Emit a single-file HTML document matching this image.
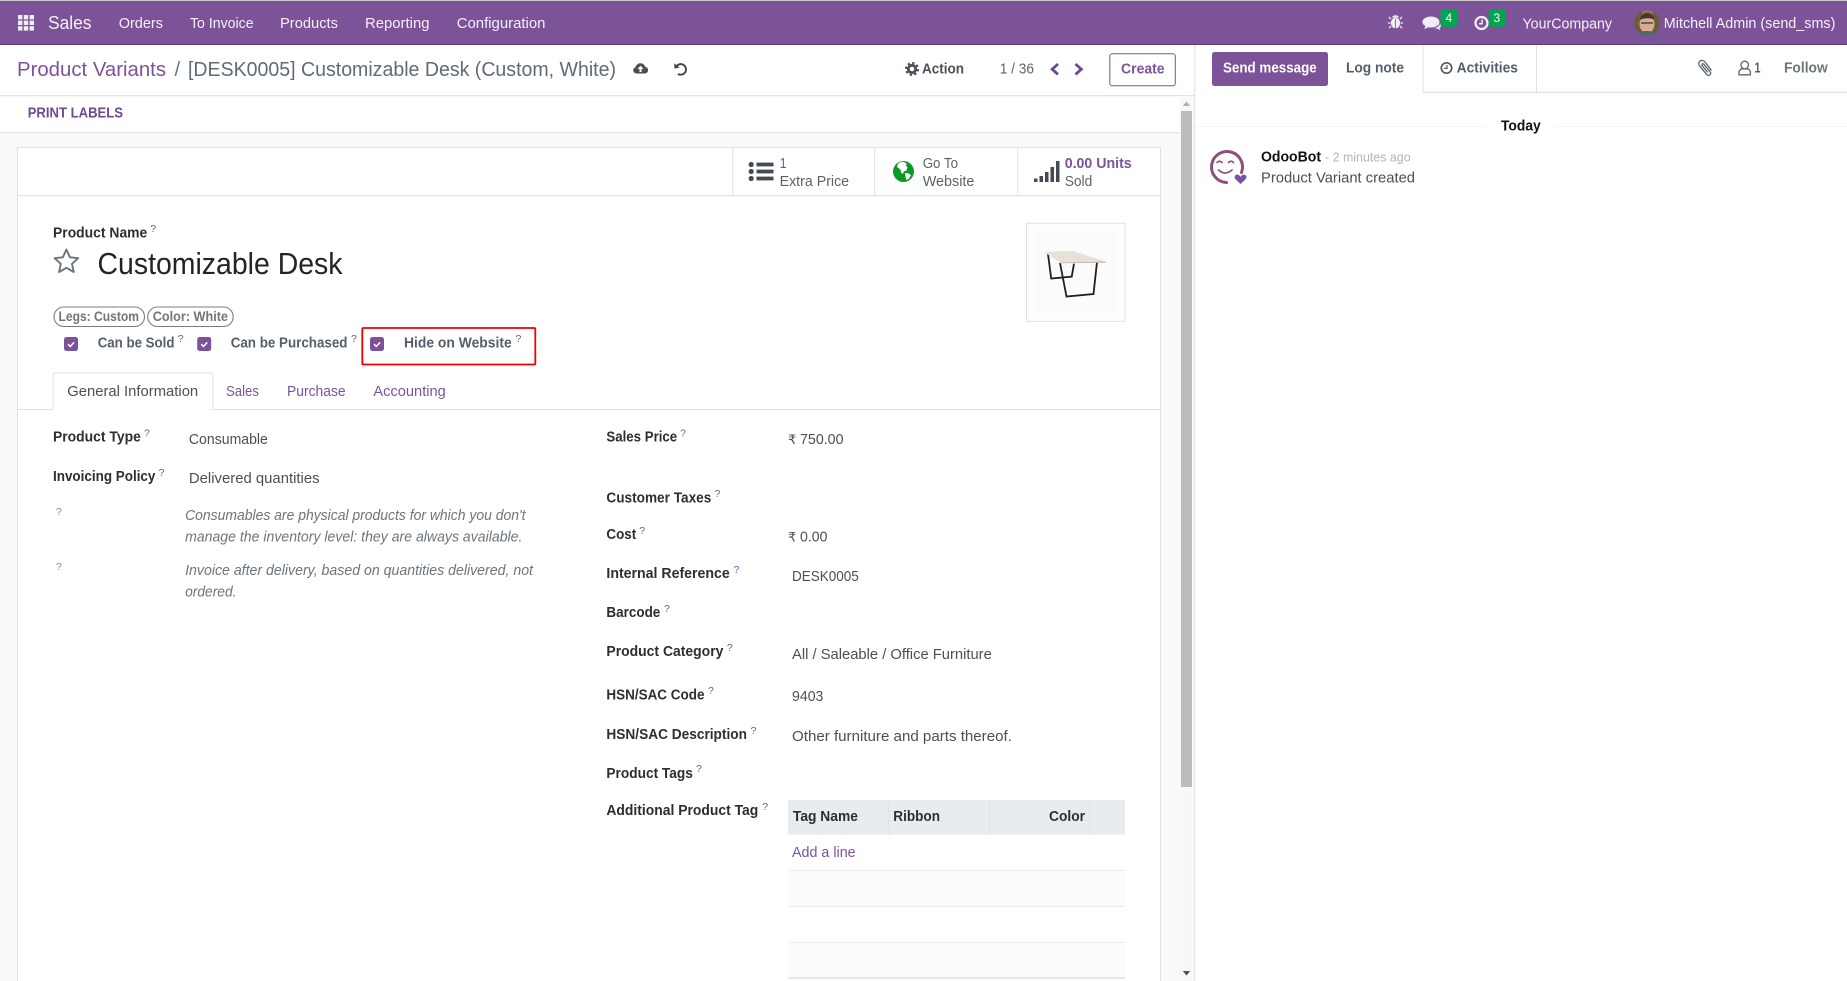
<!DOCTYPE html>
<html lang="en">
<head>
<meta charset="utf-8">
<title>Product Variants</title>
<style>
html,body{margin:0;padding:0;background:#fff;overflow:hidden}
svg{display:block}
text{font-family:"Liberation Sans",sans-serif;font-size:15px;fill:#495057}
.n{fill:rgba(255,255,255,.92);font-size:15px}
.l{font-weight:700;fill:#2a2f34;font-size:14.5px}
.p{fill:#7c5399}
.q{fill:#7c5399;font-size:10.5px}
.v{fill:#495057}
.i{font-style:italic;fill:#6c757d}
.b{font-weight:700;fill:#555f69;font-size:14.5px}
</style>
</head>
<body>
<svg xmlns="http://www.w3.org/2000/svg" width="1847" height="981" viewBox="0 0 1847 981">
<rect width="1847" height="981" fill="#fff"/>

<!-- navbar -->
<rect width="1847" height="1.2" fill="#c9c9c9"/>
<rect y="1" width="1847" height="44" fill="#7c5299"/>
<rect y="44" width="1847" height="1" fill="#5f3f78"/>
<g fill="#f1ecf4">
<rect x="18" y="15" width="4.4" height="4.4"/><rect x="23.8" y="15" width="4.4" height="4.4"/><rect x="29.6" y="15" width="4.4" height="4.4"/>
<rect x="18" y="20.6" width="4.4" height="4.4"/><rect x="23.8" y="20.6" width="4.4" height="4.4"/><rect x="29.6" y="20.6" width="4.4" height="4.4"/>
<rect x="18" y="26.2" width="4.4" height="4.4"/><rect x="23.8" y="26.2" width="4.4" height="4.4"/><rect x="29.6" y="26.2" width="4.4" height="4.4"/>
</g>
<text class="n" x="48" y="29" style="font-size:18.5px" textLength="43.5" lengthAdjust="spacingAndGlyphs">Sales</text>
<text class="n" x="118.7" y="28" textLength="44.3" lengthAdjust="spacingAndGlyphs">Orders</text>
<text class="n" x="190" y="28" textLength="63.6" lengthAdjust="spacingAndGlyphs">To Invoice</text>
<text class="n" x="280" y="28" textLength="58" lengthAdjust="spacingAndGlyphs">Products</text>
<text class="n" x="365" y="28" textLength="64.5" lengthAdjust="spacingAndGlyphs">Reporting</text>
<text class="n" x="456.7" y="28" textLength="88.8" lengthAdjust="spacingAndGlyphs">Configuration</text>

<!-- bug -->
<g fill="#f1ecf4" stroke="#f1ecf4">
<ellipse cx="1395.5" cy="23" rx="4.6" ry="5.4" stroke="none"/>
<path d="M1392 17.5a3.6 3 0 0 1 7 0z" stroke="none"/>
<path d="M1391 19l-2-2M1400 19l2-2M1390.5 23h-2.5M1400.5 23h2.5M1391 26l-2 2.2M1400 26l2 2.2" fill="none" stroke-width="1.3"/>
</g>
<rect x="1395.1" y="19" width=".8" height="9.5" fill="#7c5299"/>
<!-- chat -->
<path d="M1431 16.5c5 0 8.5 2.500 8.5 5.5s-3.500 5.500-8.500 5.500c-1 0-2-.1-3-.3-1 .9-2.300 1.400-4 1.600 .8-.9 1.300-1.800 1.400-2.800-2-1-3-2.500-3-4 0-3 3.500-5.500 8.600-5.500z" fill="#f1ecf4"/>
<path d="M1440 23.500c.9.800 1.200 1.700 1 2.600-.2.800-.8 1.500-1.500 1.900.1.700.5 1.300 1 1.900-1.400-.2-2.500-.7-3.300-1.400-1 .1-2 0-2.900-.2 2.900-.6 5.300-2.300 5.700-4.800z" fill="#f1ecf4"/>
<rect x="1440.6" y="9" width="16.4" height="17.7" rx="2" fill="#00a64f"/>
<text x="1445.5" y="22" style="font-size:12px;fill:#fff">4</text>
<!-- clock -->
<circle cx="1481.5" cy="23" r="6" fill="none" stroke="#f1ecf4" stroke-width="2.300"/>
<path d="M1482 19.500v4.200h-3" fill="none" stroke="#f1ecf4" stroke-width="1.500"/>
<rect x="1488.7" y="9" width="16.4" height="17.7" rx="2" fill="#00a64f"/>
<text x="1493.5" y="22" style="font-size:12px;fill:#fff">3</text>
<text class="n" x="1522.5" y="28.3" textLength="89.5" lengthAdjust="spacingAndGlyphs">YourCompany</text>
<!-- avatar -->
<clipPath id="av"><circle cx="1647" cy="23" r="13"/></clipPath>
<g clip-path="url(#av)">
<rect x="1634" y="10" width="26" height="26" fill="#8a7658"/>
<path d="M1634 10h8v26h-8zM1653 10h7v26h-7z" fill="#6d5a42"/>
<ellipse cx="1647" cy="24" rx="7.5" ry="9" fill="#d9ab90"/>
<path d="M1640 20c.5-4.500 3.500-7 7.500-7s6.500 2.500 7 7c-3-2.200-10-2.600-14.500 0z" fill="#4a372b"/>
<path d="M1641 23h12" stroke="#3a3532" stroke-width="1.200"/>
<path d="M1635 36c2-4 6-5 12-5s10 1 12 5z" fill="#55656c"/>
</g>
<text class="n" x="1663.8" y="28" textLength="171.6" lengthAdjust="spacingAndGlyphs">Mitchell Admin (send_sms)</text>

<!-- control panel -->
<text x="17" y="76" class="p" style="font-size:20.5px" textLength="149" lengthAdjust="spacingAndGlyphs">Product Variants</text>
<text x="174.500" y="76" style="font-size:20.5px;fill:#6c757d">/</text>
<text x="188" y="76" style="font-size:20.5px;fill:#5f6b76" textLength="428" lengthAdjust="spacingAndGlyphs">[DESK0005] Customizable Desk (Custom, White)</text>
<!-- cloud upload -->
<path d="M637 73.500c-2.200 0-3.800-1.500-3.800-3.300 0-1.500 1-2.700 2.400-3.100 .5-2.300 2.400-3.900 4.800-3.900 2.300 0 4.200 1.400 4.700 3.500 1.700.2 3 1.700 3 3.400 0 2-1.700 3.400-3.800 3.400z" fill="#4a4f55"/>
<path d="M640.500 65.800l-3 3.200h2v3h2v-3h2z" fill="#fff"/>
<!-- undo -->
<path d="M676.500 66.200a5.300 5.300 0 1 1 1.400 7.700" fill="none" stroke="#3d4349" stroke-width="1.900"/>
<path d="M674.200 63.200l.3 5.300 5-.8z" fill="#3d4349"/>
<!-- gear -->
<circle cx="912" cy="69" r="3.700" fill="none" stroke="#4b5158" stroke-width="2.800"/>
<circle cx="912" cy="69" r="6" fill="none" stroke="#4b5158" stroke-width="2" stroke-dasharray="2.400 2.300"/>
<text x="922" y="73.3" class="b" style="fill:#4b5158" textLength="42" lengthAdjust="spacingAndGlyphs">Action</text>
<text x="999.7" y="73.5" style="font-size:14.5px;fill:#5b646d" textLength="34.3" lengthAdjust="spacingAndGlyphs">1 / 36</text>
<path d="M1058 64l-5.800 5.200 5.800 5.200" fill="none" stroke="#6a4a8a" stroke-width="2.800"/>
<path d="M1075.500 64l5.800 5.200-5.800 5.200" fill="none" stroke="#6a4a8a" stroke-width="2.800"/>
<rect x="1109.800" y="53.800" width="65.500" height="32" rx="2.500" fill="#fff" stroke="#7c5399"/>
<text x="1121" y="73.300" class="p" style="font-size:14.5px;font-weight:700" textLength="43.600" lengthAdjust="spacingAndGlyphs">Create</text>
<rect y="95" width="1195" height="1.300" fill="#dee2e6"/>

<!-- action row -->
<text x="27.7" y="117.7" style="font-size:14.5px;font-weight:700;fill:#6f4a8e" textLength="95.300" lengthAdjust="spacingAndGlyphs">PRINT LABELS</text>
<rect y="132" width="1180" height="1.300" fill="#dee2e6"/>

<!-- form background -->
<rect y="133.300" width="1180" height="848" fill="#f8f9fa"/>
<rect x="17" y="147" width="1144" height="834" fill="#fff"/>
<path d="M17.500 981V147.500H1160.500V981" fill="none" stroke="#dee2e6"/>
<rect x="17" y="195" width="1144" height="1.200" fill="#dee2e6"/>
<rect x="732.200" y="147" width="1" height="48" fill="#dee2e6"/>
<rect x="874.200" y="147" width="1" height="48" fill="#dee2e6"/>
<rect x="1017.200" y="147" width="1" height="48" fill="#dee2e6"/>

<!-- stats -->
<g fill="#454b52">
<circle cx="751.200" cy="164.500" r="2.600"/><circle cx="751.200" cy="171.500" r="2.600"/><circle cx="751.200" cy="178.500" r="2.600"/>
<rect x="756.500" y="162.600" width="17" height="3.800"/><rect x="756.500" y="169.600" width="17" height="3.800"/><rect x="756.500" y="176.600" width="17" height="3.800"/>
</g>
<text x="779.600" y="168" class="p" style="font-size:14.5px" textLength="7" lengthAdjust="spacingAndGlyphs">1</text>
<text x="779.600" y="186" style="font-size:15px;fill:#5a636c" textLength="69.500" lengthAdjust="spacingAndGlyphs">Extra Price</text>

<circle cx="903.500" cy="171.500" r="10.500" fill="#0b9a28"/>
<path d="M898 163.500c2-1.500 4-1.800 6-1.500l3 2-1.500 1.500 2 1.500-1 3.500-2.500 1-1.500 2.500-1.500-1.500-.5-3-3.500-2.500z" fill="#fff"/>
<path d="M905 173l4 .5 2 2-2.500 3.500-2 1-1-3z" fill="#fff"/>
<text x="922.700" y="168" style="font-size:15px;fill:#5a636c" textLength="35.300" lengthAdjust="spacingAndGlyphs">Go To</text>
<text x="922.700" y="186" style="font-size:15px;fill:#5a636c" textLength="51.700" lengthAdjust="spacingAndGlyphs">Website</text>

<g fill="#454b52">
<rect x="1034" y="178.500" width="3.500" height="3.500"/><rect x="1039.500" y="176" width="3.500" height="6"/><rect x="1045" y="172" width="3.500" height="10"/><rect x="1050.500" y="167" width="3.500" height="15"/><rect x="1056" y="161" width="3.500" height="21"/>
</g>
<text x="1064.700" y="168" class="p" style="font-size:14.5px;font-weight:700" textLength="67" lengthAdjust="spacingAndGlyphs">0.00 Units</text>
<text x="1064.700" y="186" style="font-size:15px;fill:#5a636c" textLength="27.600" lengthAdjust="spacingAndGlyphs">Sold</text>

<!-- title -->
<text x="53" y="237.700" class="l" textLength="94.300" lengthAdjust="spacingAndGlyphs">Product Name</text>
<text x="150.300" y="232" class="q">?</text>
<path d="M66.400 249.500l3.500 7.800 8.300.9-6.200 5.600 1.700 8.200-7.300-4.200-7.300 4.200 1.700-8.200-6.200-5.600 8.300-.9z" fill="none" stroke="#6c757d" stroke-width="1.900" stroke-linejoin="round"/>
<text x="97.500" y="274" style="font-size:30.5px;fill:#212529" textLength="245" lengthAdjust="spacingAndGlyphs">Customizable Desk</text>

<!-- image -->
<rect x="1026.500" y="223.300" width="98.500" height="98" fill="#fdfdfd" stroke="#dee2e6"/>
<rect x="1035" y="232" width="81" height="80" fill="#fbfbfb"/>
<path d="M1048 254l3.200 24.500 20.500-1.800 2.300-13M1060 263l6.500 33.500 27-2.500 3.500-32" fill="none" stroke="#1f1f1f" stroke-width="1.800"/>
<path d="M1044 252l29-1.200 33 10.800-46 .8z" fill="#e6e2da"/>
<path d="M1060 262.500l46-.9v1.100l-46 .6z" fill="#bcb8b0"/>

<!-- pills -->
<rect x="54" y="307" width="90.500" height="19.500" rx="9.700" fill="#fff" stroke="#7d7d7d" stroke-width="1.100"/>
<rect x="147.700" y="307" width="85.500" height="19.500" rx="9.700" fill="#fff" stroke="#7d7d7d" stroke-width="1.100"/>
<text x="58.500" y="321" style="font-size:13.5px;fill:#6f767d;font-weight:700" textLength="80.500" lengthAdjust="spacingAndGlyphs">Legs: Custom</text>
<text x="152.700" y="321" style="font-size:13.5px;fill:#6f767d;font-weight:700" textLength="75.300" lengthAdjust="spacingAndGlyphs">Color: White</text>

<!-- checkboxes -->
<g fill="#7c5399">
<rect x="64" y="337" width="14" height="14" rx="2.500"/>
<rect x="197.200" y="337" width="14" height="14" rx="2.500"/>
<rect x="370" y="337" width="14" height="14" rx="2.500"/>
</g>
<g fill="none" stroke="#fff" stroke-width="1.500">
<path d="M68 344.200l2.300 2.200 3.800-4"/>
<path d="M201.200 344.200l2.300 2.200 3.800-4"/>
<path d="M374 344.200l2.300 2.200 3.800-4"/>
</g>
<text x="97.700" y="347.700" class="b" textLength="76.800" lengthAdjust="spacingAndGlyphs">Can be Sold</text>
<text x="177.800" y="342" class="q">?</text>
<text x="230.700" y="347.700" class="b" textLength="116.800" lengthAdjust="spacingAndGlyphs">Can be Purchased</text>
<text x="351" y="342" class="q">?</text>
<text x="404" y="347.700" class="b" textLength="107.700" lengthAdjust="spacingAndGlyphs">Hide on Website</text>
<text x="515.500" y="342" class="q">?</text>
<rect x="362.300" y="328" width="173" height="36.500" rx="1" fill="none" stroke="#f00000" stroke-width="1.800"/>

<!-- tabs -->
<rect x="17" y="409" width="1144" height="1" fill="#dee2e6"/>
<path d="M53.200 410V375a2 2 0 0 1 2-2H210.800a2 2 0 0 1 2 2V410" fill="#fff" stroke="#dee2e6"/>
<text x="67.200" y="396" style="font-size:15px;fill:#495057" textLength="131" lengthAdjust="spacingAndGlyphs">General Information</text>
<text x="226" y="396" class="p" textLength="33" lengthAdjust="spacingAndGlyphs">Sales</text>
<text x="287" y="396" class="p" textLength="58.600" lengthAdjust="spacingAndGlyphs">Purchase</text>
<text x="373.400" y="396" class="p" textLength="72.400" lengthAdjust="spacingAndGlyphs">Accounting</text>

<!-- left group -->
<text x="53" y="441.700" class="l" textLength="87.800" lengthAdjust="spacingAndGlyphs">Product Type</text>
<text x="144" y="436.700" class="q">?</text>
<text x="188.900" y="444" class="v" textLength="79" lengthAdjust="spacingAndGlyphs">Consumable</text>
<text x="53" y="481" class="l" textLength="102.400" lengthAdjust="spacingAndGlyphs">Invoicing Policy</text>
<text x="158.500" y="476" class="q">?</text>
<text x="188.900" y="483" class="v" textLength="130.700" lengthAdjust="spacingAndGlyphs">Delivered quantities</text>
<text x="56" y="515" class="q" style="fill:#9a82ae">?</text>
<text x="185.100" y="520" class="i" textLength="340.400" lengthAdjust="spacingAndGlyphs">Consumables are physical products for which you don't</text>
<text x="185.100" y="541.700" class="i" textLength="337.300" lengthAdjust="spacingAndGlyphs">manage the inventory level: they are always available.</text>
<text x="56" y="570" class="q" style="fill:#9a82ae">?</text>
<text x="185.100" y="575" class="i" textLength="347.900" lengthAdjust="spacingAndGlyphs">Invoice after delivery, based on quantities delivered, not</text>
<text x="185.100" y="596.700" class="i" textLength="51.400" lengthAdjust="spacingAndGlyphs">ordered.</text>

<!-- right group -->
<text x="606.400" y="441.700" class="l" textLength="70.800" lengthAdjust="spacingAndGlyphs">Sales Price</text>
<text x="680.100" y="436.700" class="q">?</text>
<text x="788" y="444" class="v" style="font-family:'DejaVu Sans',sans-serif;font-size:13px">₹</text>
<text x="800" y="444" class="v" textLength="43.500" lengthAdjust="spacingAndGlyphs">750.00</text>
<text x="606.400" y="502.700" class="l" textLength="104.900" lengthAdjust="spacingAndGlyphs">Customer Taxes</text>
<text x="714.500" y="497" class="q">?</text>
<text x="606.400" y="539" class="l" textLength="29.800" lengthAdjust="spacingAndGlyphs">Cost</text>
<text x="639.300" y="534" class="q">?</text>
<text x="788" y="541.700" class="v" style="font-family:'DejaVu Sans',sans-serif;font-size:13px">₹</text>
<text x="800" y="541.700" class="v" textLength="27.400" lengthAdjust="spacingAndGlyphs">0.00</text>
<text x="606.400" y="578" class="l" textLength="123.400" lengthAdjust="spacingAndGlyphs">Internal Reference</text>
<text x="733.500" y="573" class="q">?</text>
<text x="792" y="581" class="v" textLength="66.800" lengthAdjust="spacingAndGlyphs">DESK0005</text>
<text x="606.400" y="617" class="l" textLength="53.900" lengthAdjust="spacingAndGlyphs">Barcode</text>
<text x="664" y="612" class="q">?</text>
<text x="606.400" y="656" class="l" textLength="117" lengthAdjust="spacingAndGlyphs">Product Category</text>
<text x="726.900" y="651" class="q">?</text>
<text x="792" y="659" class="v" textLength="199.800" lengthAdjust="spacingAndGlyphs">All / Saleable / Office Furniture</text>
<text x="606.400" y="699.300" class="l" textLength="98.100" lengthAdjust="spacingAndGlyphs">HSN/SAC Code</text>
<text x="708" y="694" class="q">?</text>
<text x="792" y="701" class="v" textLength="31.400" lengthAdjust="spacingAndGlyphs">9403</text>
<text x="606.400" y="739" class="l" textLength="140.600" lengthAdjust="spacingAndGlyphs">HSN/SAC Description</text>
<text x="750.500" y="734" class="q">?</text>
<text x="792" y="741" class="v" textLength="219.900" lengthAdjust="spacingAndGlyphs">Other furniture and parts thereof.</text>
<text x="606.400" y="778" class="l" textLength="86.500" lengthAdjust="spacingAndGlyphs">Product Tags</text>
<text x="696" y="772" class="q">?</text>
<text x="606.400" y="815" class="l" textLength="151.900" lengthAdjust="spacingAndGlyphs">Additional Product Tag</text>
<text x="762.300" y="810" class="q">?</text>

<!-- table -->
<rect x="788" y="800" width="337" height="34.700" fill="#e9ecef"/>
<rect x="888.200" y="800" width="1" height="34.700" fill="#dee2e6"/>
<rect x="989.500" y="800" width="1" height="34.700" fill="#dee2e6"/>
<rect x="1089.200" y="800" width="1" height="34.700" fill="#dee2e6"/>
<text x="792.900" y="821" class="l" textLength="65.100" lengthAdjust="spacingAndGlyphs">Tag Name</text>
<text x="893.300" y="821" class="l" textLength="46.700" lengthAdjust="spacingAndGlyphs">Ribbon</text>
<text x="1049" y="821" class="l" textLength="36" lengthAdjust="spacingAndGlyphs">Color</text>
<text x="792" y="857" class="p" textLength="63.600" lengthAdjust="spacingAndGlyphs">Add a line</text>
<rect x="788" y="870" width="337" height="36" fill="#fbfbfb"/>
<rect x="788" y="942" width="337" height="35" fill="#fbfbfb"/>
<rect x="788" y="869.800" width="337" height="1.100" fill="#e9ecef"/>
<rect x="788" y="906" width="337" height="1.100" fill="#e9ecef"/>
<rect x="788" y="941.800" width="337" height="1.100" fill="#e9ecef"/>
<rect x="788" y="977" width="337" height="2" fill="#e4e7ea"/>

<!-- scrollbar -->
<rect x="1179.500" y="96" width="15" height="885" fill="#f8f8f8"/>
<rect x="1181" y="111" width="11" height="676" fill="#bcbcbc"/>
<path d="M1186.500 101.500l3.700 4.500h-7.400z" fill="#b0b0b0"/>
<path d="M1186.500 975.500l3.700-4.500h-7.400z" fill="#505050"/>
<rect x="1194.300" y="45" width="1" height="936" fill="#dee2e6"/>

<!-- chatter -->
<rect x="1212" y="52" width="116" height="34" rx="2.500" fill="#7c5399"/>
<text x="1223" y="72.700" style="font-size:14.5px;font-weight:700;fill:#fff" textLength="93.700" lengthAdjust="spacingAndGlyphs">Send message</text>
<text x="1346" y="72.700" class="b" textLength="58" lengthAdjust="spacingAndGlyphs">Log note</text>
<rect x="1422.500" y="45" width="1" height="47" fill="#dee2e6"/>
<rect x="1536" y="45" width="1" height="47" fill="#dee2e6"/>
<rect x="1422.500" y="91.600" width="425" height="1.300" fill="#dee2e6"/>
<circle cx="1446.500" cy="68" r="5.200" fill="none" stroke="#4f5963" stroke-width="1.700"/>
<path d="M1447 65v3.400h-3" fill="none" stroke="#4f5963" stroke-width="1.200"/>
<text x="1456.600" y="72.700" class="b" textLength="61.400" lengthAdjust="spacingAndGlyphs">Activities</text>
<path d="M1711.500 70.500l-6.500-8.500c-1.300-1.700-3.500-2-5-.9-1.500 1.200-1.600 3.300-.3 5l6.900 8.300c.9 1.100 2.300 1.300 3.300.6 1-.8 1.100-2.100.2-3.200l-6.200-7.500c-.5-.6-1.200-.7-1.700-.3-.5.4-.5 1.100 0 1.700l5.500 6.700" fill="none" stroke="#5a636c" stroke-width="1.300"/>
<circle cx="1744.700" cy="65" r="3.800" fill="none" stroke="#5a636c" stroke-width="1.300"/>
<path d="M1739 74.800v-2.300c0-2.200 1.800-3.700 3.700-3.700h4c1.900 0 3.700 1.500 3.700 3.700v2.300z" fill="none" stroke="#5a636c" stroke-width="1.300"/>
<text x="1754.500" y="72.700" class="b" textLength="6" lengthAdjust="spacingAndGlyphs">1</text>
<text x="1784" y="72.700" class="b" style="fill:#6c757d" textLength="43.700" lengthAdjust="spacingAndGlyphs">Follow</text>

<rect x="1195.300" y="126" width="652" height="1" fill="#f5f5f5"/>
<rect x="1486.600" y="120" width="67.400" height="14" fill="#fff"/>
<text x="1501" y="130.700" style="font-size:14.5px;font-weight:700;fill:#111" textLength="39.700" lengthAdjust="spacingAndGlyphs">Today</text>

<!-- OdooBot -->
<path d="M1241.500 172.500a15.500 15.500 0 1 0-15 10" fill="none" stroke="#8f4f7d" stroke-width="3" stroke-linecap="round"/>
<path d="M1217 162.500q2.500-2.500 5 0M1228.500 162.500q2.500-2.500 5 0M1218.500 170q6.500 6 13.500 0" fill="none" stroke="#8f4f7d" stroke-width="1.700" stroke-linecap="round"/>
<path d="M1240.500 184.500l-5.300-5.200c-1.900-2-.5-5 2-5 1.500 0 2.500.8 3.300 2 .8-1.200 1.800-2 3.300-2 2.500 0 3.900 3 2 5z" fill="#7c4fa6" stroke="#fff" stroke-width=".6"/>
<text x="1261" y="161.300" style="font-size:14.5px;font-weight:700;fill:#111" textLength="60" lengthAdjust="spacingAndGlyphs">OdooBot</text>
<text x="1325" y="161.300" style="font-size:13px;fill:#adb5bd" textLength="85.600" lengthAdjust="spacingAndGlyphs">- 2 minutes ago</text>
<text x="1261" y="182.600" class="v" textLength="154" lengthAdjust="spacingAndGlyphs">Product Variant created</text>
</svg>
</body>
</html>
